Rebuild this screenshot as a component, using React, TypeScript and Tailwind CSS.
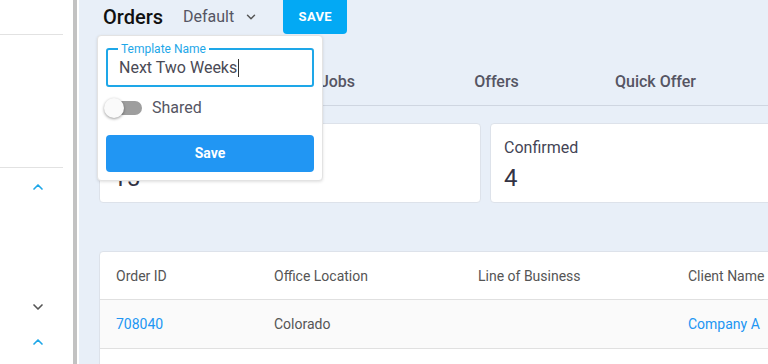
import React from "react";
import { ChevronDown, ChevronUp } from "lucide-react";

const tabs = ["", "Jobs", "Offers", "Quick Offer"];

const columns = [
  { label: "Order ID", w: "w-[158px]" },
  { label: "Office Location", w: "w-[204px]" },
  { label: "Line of Business", w: "w-[210px]" },
  { label: "Client Name", w: "w-[160px]" },
];

function Sidebar() {
  return (
    <div className="w-[73px] shrink-0 bg-white flex flex-col">
      <div className="h-[35px] w-[63px] border-b border-[#e2e2e2]" />
      <div className="h-[133px] w-[63px] border-b border-[#e2e2e2]" />
      <div className="flex flex-col items-center pl-[2px] w-[73px]">
        <ChevronUp size={16} strokeWidth={2.5} className="mt-[11px] text-[#1ea7e8]" />
        <ChevronDown size={16} strokeWidth={2.5} className="mt-[104px] text-[#555]" />
        <ChevronUp size={16} strokeWidth={2.5} className="mt-[19px] text-[#1ea7e8]" />
      </div>
    </div>
  );
}

function TemplatePopover() {
  return (
    <div className="absolute left-[18px] top-[35px] w-[226px] h-[146px] bg-white rounded border border-[#e3e3e3] shadow-[0_1px_3px_rgba(0,0,0,0.12)] px-[8px] pt-[12px]">
      <div className="relative h-[39px] border-2 border-[#1ea7e8] rounded-[3px] flex items-center pl-[11px]">
        <span className="absolute -top-[8px] left-[10px] bg-white px-[3px] text-[12px] leading-[14px] text-[#1ea7e8]">
          Template Name
        </span>
        <span className="text-[16px] text-[#4a4a55] leading-none">Next Two Weeks</span>
        <span className="w-px h-[18px] bg-[#333] ml-px" />
      </div>
      <div className="flex items-center mt-[11px] h-[20px]">
        <div className="relative w-[36px] h-[20px] flex items-center">
          <div className="ml-[1px] w-[35px] h-[14px] rounded-full bg-[#9e9e9e]" />
          <div className="absolute left-[-2px] top-0 w-[20px] h-[20px] rounded-full bg-[#fafafa] shadow-[0_1px_3px_rgba(0,0,0,0.4)]" />
        </div>
        <span className="ml-[10px] text-[16px] text-[#555563]">Shared</span>
      </div>
      <button className="mt-[17px] w-full h-[37px] rounded bg-[#2196f3] text-white text-[14px] font-bold">
        Save
      </button>
    </div>
  );
}

export default function App() {
  return (
    <div className="flex h-[364px] w-[768px] overflow-hidden font-['Roboto',sans-serif]">
      <Sidebar />
      <div className="w-[4px] shrink-0 bg-[#c2c2c2]" />
      <div className="w-[2px] shrink-0 bg-white" />
      <div className="relative flex-1 bg-[#e8eff8] overflow-hidden pl-[20px]">
        <div className="flex items-center h-[34px]">
          <span className="ml-[4px] text-[20px] font-medium text-[#111]">Orders</span>
          <span className="ml-[20px] text-[16px] text-[#555563]">Default</span>
          <ChevronDown size={14} strokeWidth={2.5} className="ml-[10px] text-[#555]" />
          <button className="ml-[25px] w-[64px] h-[40px] -mt-[6px] rounded bg-[#03a9f4] text-white text-[13px] font-bold tracking-wide pt-[6px]">
            SAVE
          </button>
        </div>
        <div className="flex mt-[23px] h-[49px] w-[800px] border-b border-[#cfd6e1] pt-[2px]">
          {tabs.map((t, i) => (
            <div key={i} className="w-[159px] flex items-center justify-center text-[16px] font-medium text-[#555563]">
              {t}
            </div>
          ))}
        </div>
        <div className="flex gap-[9px] mt-[17px]">
          {[
            ["Orders", "15"],
            ["Confirmed", "4"],
          ].map(([label, n]) => (
            <div
              key={label}
              className="w-[382px] shrink-0 h-[80px] bg-white rounded border border-[#dde2ea] px-[13px] pt-[12px]"
            >
              <div className="text-[16px] text-[#444455]">{label}</div>
              <div className="text-[24px] leading-[30px] mt-[3px] text-[#333344]">{n}</div>
            </div>
          ))}
        </div>
        <div className="mt-[48px] w-[760px] bg-white rounded border border-[#dde2ea] text-[14px]">
          <div className="flex h-[48px] items-center pl-[16px] pt-[2px] border-b border-[#e0e0e0] text-[#555]">
            {columns.map((c) => (
              <div key={c.label} className={`${c.w} shrink-0`}>
                {c.label}
              </div>
            ))}
          </div>
          <div className="flex h-[49px] items-center pl-[16px] bg-[#fafafa] border-b border-[#e0e0e0] text-[#555]">
            <div className="w-[158px] shrink-0 text-[#2196f3]">708040</div>
            <div className="w-[204px] shrink-0">Colorado</div>
            <div className="w-[210px] shrink-0" />
            <div className="w-[160px] shrink-0 text-[#2196f3]">Company A</div>
          </div>
          <div className="h-[40px]" />
        </div>
        <TemplatePopover />
      </div>
    </div>
  );
}
